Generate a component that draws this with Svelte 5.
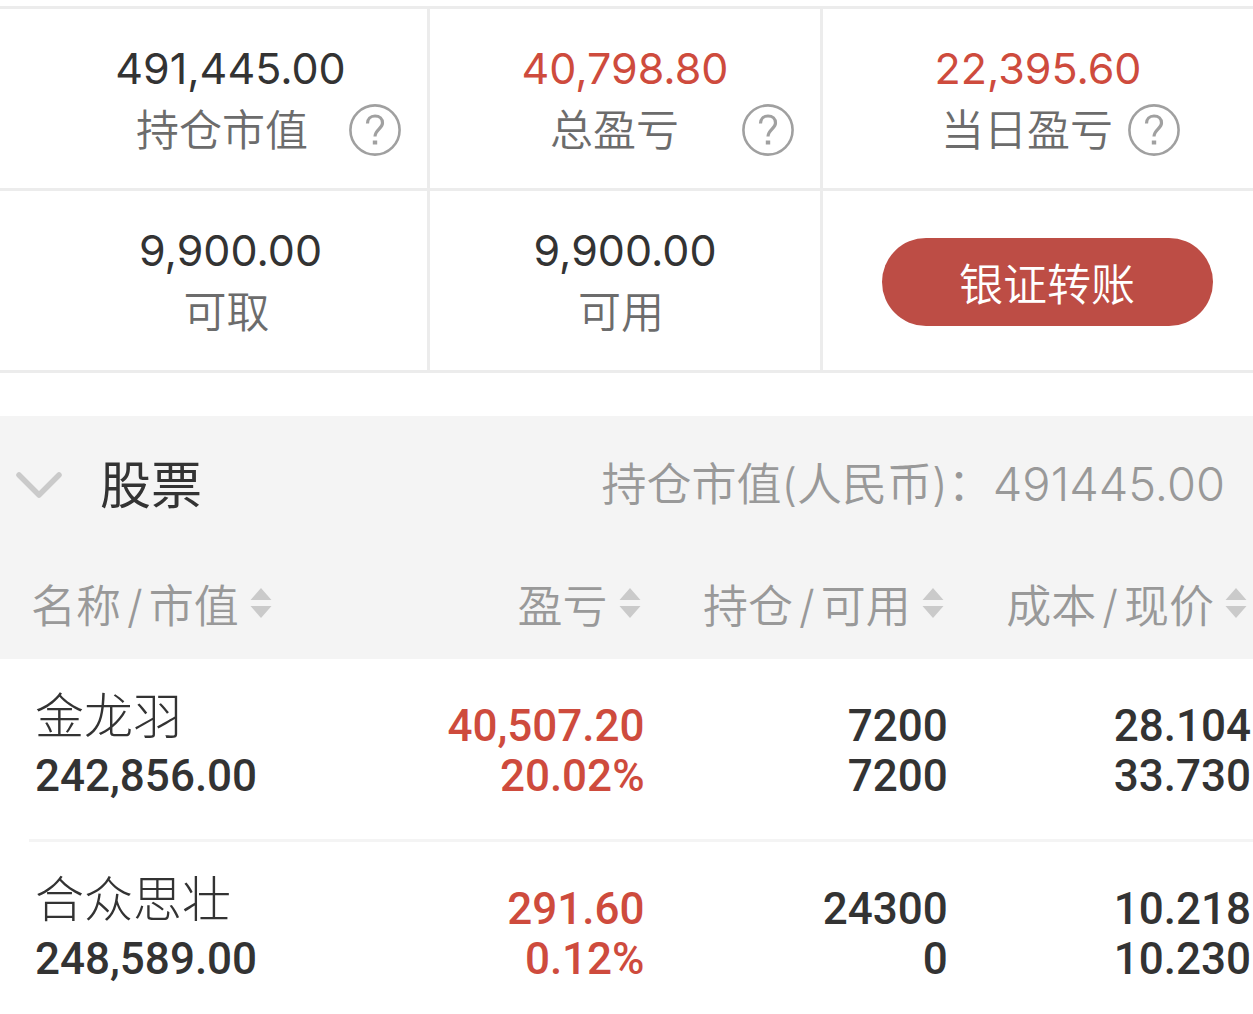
<script>
  const top = [
    { value: '491,445.00', label: '持仓市值', help: true, col: 'market' },
    { value: '40,798.80', label: '总盈亏', help: true, red: true, col: 'total' },
    { value: '22,395.60', label: '当日盈亏', help: true, red: true, col: 'daily' },
    { value: '9,900.00', label: '可取', col: 'market' },
    { value: '9,900.00', label: '可用', col: 'total' }
  ];
  const columns = [['名称', '市值'], ['盈亏'], ['持仓', '可用'], ['成本', '现价']];
  const stocks = [
    { name: '金龙羽', market: '242,856.00', profit: '40,507.20', rate: '20.02%', held: '7200', free: '7200', cost: '28.104', price: '33.730' },
    { name: '合众思壮', market: '248,589.00', profit: '291.60', rate: '0.12%', held: '24300', free: '0', cost: '10.218', price: '10.230' }
  ];
</script>

<main>
  <section class="summary">
    {#each top as item}
      <div class="cell {item.col}">
        <div class="value" class:red={item.red}>{item.value}</div>
        <div class="label" class:with-help={item.help}>
          <span>{item.label}</span>
          {#if item.help}
            <button class="help" aria-label="{item.label}说明">
              <svg viewBox="0 0 52 52" fill="none" stroke="#a0a0a0" stroke-width="2.6">
                <circle cx="26" cy="26" r="24.6" />
                <path d="M18.5 19.5c0-4.500 3-7.500 7.500-7.500s7.500 3 7.500 7c0 5.500-7.500 7-7.500 13.500" stroke-width="3.2" />
                <path d="M23.800 36.500h4.400v4h-4.400z" fill="#a0a0a0" stroke="none" />
              </svg>
            </button>
          {/if}
        </div>
      </div>
    {/each}
    <div class="cell action"><button class="transfer">银证转账</button></div>
  </section>

  <section class="holdings">
    <header>
      <button class="toggle" aria-label="收起股票">
        <svg viewBox="0 0 46 32" fill="none" stroke="#cacaca" stroke-width="5.5" stroke-linecap="round" stroke-linejoin="round"><path d="M3 9l20 20L43 9" /></svg>
      </button>
      <h2>股票</h2>
      <p><span>持仓市值(人民币)：</span><span class="sum">491445.00</span></p>
    </header>
    <table>
      <thead>
        <tr>
          {#each columns as parts}
            <th scope="col">
              <button class="sort">
                <span>{parts[0]}{#if parts[1]}<span class="slash">/</span>{parts[1]}{/if}</span>
                <svg viewBox="0 0 22 30" fill="#cacaca"><path d="M11 0l10.500 12H.5zM11 30L.5 18h21z" /></svg>
              </button>
            </th>
          {/each}
        </tr>
      </thead>
      <tbody>
        {#each stocks as s}
          <tr>
            <td><div class="name">{s.name}</div><div>{s.market}</div></td>
            <td class="red"><div>{s.profit}</div><div>{s.rate}</div></td>
            <td><div>{s.held}</div><div>{s.free}</div></td>
            <td><div>{s.cost}</div><div>{s.price}</div></td>
          </tr>
        {/each}
      </tbody>
    </table>
  </section>
</main>

<style>
  :global(body) { margin: 0; background: #fff; }
  main { padding-top: 6px; overflow: hidden; color: #333; font-family: Inter, "Noto Sans CJK SC", sans-serif; }
  button { padding: 0; border: 0; background: none; color: inherit; font: inherit; cursor: pointer; }
  svg { display: block; }
  .red { color: #ce4b3d; }
  .summary { display: grid; grid-template-columns: 430fr 393fr 430fr; border-top: 3px solid #ececec; }
  .cell { box-sizing: border-box; height: 182px; padding-top: 32px; border-right: 3px solid #ececec; border-bottom: 3px solid #ececec; text-align: center; }
  .cell:nth-child(3n) { border-right: 0; }
  .market .value { padding-left: 34px; }
  .market .label { padding-left: 26px; }
  .total .label { padding-right: 8px; }
  .value { font-size: 43px; line-height: 55px; }
  .label { color: #6c6c6c; font-size: 43px; line-height: 68px; font-weight: 350; }
  .label.with-help { display: flex; align-items: center; justify-content: flex-end; padding-right: 26px; }
  .help { width: 52px; height: 52px; margin-left: 41px; }
  .total .help { margin-left: 63px; }
  .daily .help { margin-left: 15px; }
  .daily .label.with-help { padding-right: 73px; }
  .action { display: flex; align-items: center; justify-content: center; padding: 2px 0 0 18px; }
  .transfer { width: 331px; height: 88px; border-radius: 44px; background: #bd4d45; color: #fff; font-size: 44px; font-weight: 350; }
  .holdings { margin-top: 43px; }
  header { display: flex; align-items: center; box-sizing: border-box; height: 137px; padding: 0 28px 6px 16px; background: #f4f4f4; }
  .toggle { width: 46px; margin-right: 38px; }
  h2 { margin: 0; font-size: 51px; font-weight: 400; }
  p { display: flex; align-items: baseline; margin: 0 0 0 auto; color: #999; font-size: 45px; font-weight: 350; }
  .sum { font-size: 47px; font-weight: 300; }
  table { width: 100%; border-collapse: collapse; table-layout: fixed; }
  th { box-sizing: border-box; width: 24.2%; height: 106px; padding: 0 6px 6px 0; background: #f4f4f4; color: #999; font-size: 45px; font-weight: 350; text-align: right; }
  th:nth-child(-n+2) { width: 25.8%; }
  th:first-child { padding-left: 31px; text-align: left; }
  .sort { display: inline-flex; align-items: center; gap: 11px; white-space: nowrap; }
  .sort svg { width: 22px; height: 30px; }
  .slash { padding: 0 6px; }
  tbody tr { background: linear-gradient(#f4f4f4, #f4f4f4) right bottom / calc(100% - 29px) 3px no-repeat; }
  tbody tr:last-child { background: none; }
  td { box-sizing: border-box; height: 183px; padding: 42px 2px 0 0; vertical-align: top; text-align: right; font: 500 44px/50px Roboto, sans-serif; }
  td:first-child { padding: 24px 0 0 35px; text-align: left; }
  .name { margin-bottom: 8px; font: 300 49px/60px "Noto Sans CJK SC", sans-serif; }
</style>
